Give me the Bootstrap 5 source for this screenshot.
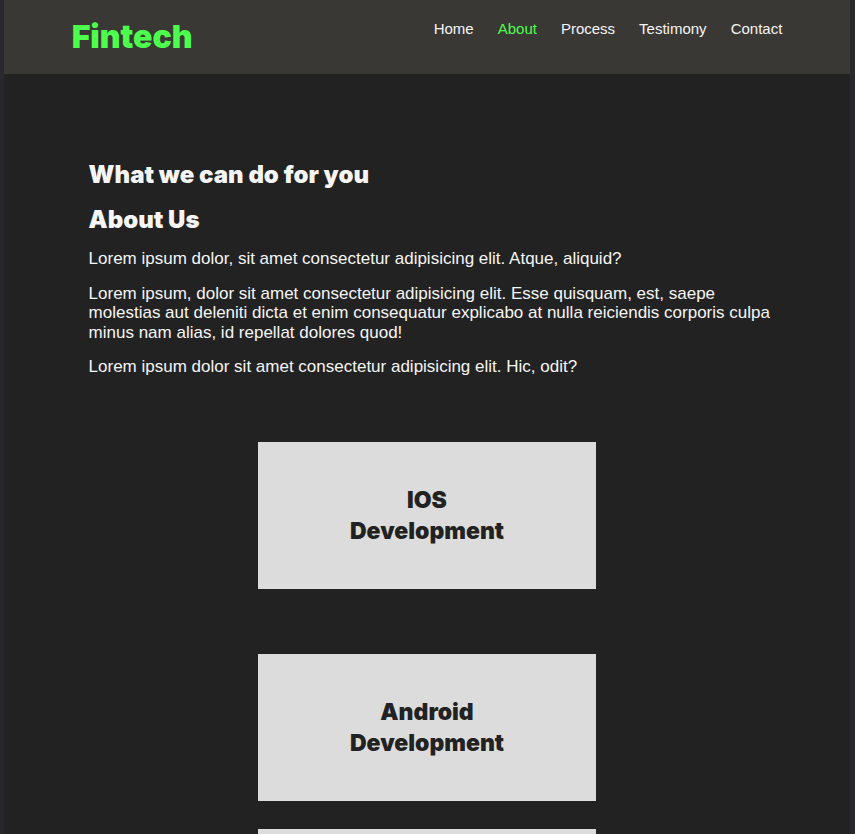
<!DOCTYPE html>
<html lang="en">
<head>
<meta charset="utf-8">
<meta name="viewport" content="width=device-width, initial-scale=1">
<title>Fintech</title>
<link href="https://cdn.jsdelivr.net/npm/bootstrap@5.3.0/dist/css/bootstrap.min.css" rel="stylesheet">
<style>
body { background: #29282d; color: #f5f5f5; font-family: "Liberation Sans", Arial, sans-serif; font-size: 17px; line-height: 1.15; }
.page-shell { margin: 0 5px 0 4px; background: #222; }
.site-header { background: #3a3835; padding: 15px 8% 16px; }
.brand-name { color: #4dff4d; font: 900 32px/43px Inter, "Arial Black", sans-serif; }
.site-header .nav { gap: 24px; padding-top: 4px; }
.site-header .nav-link { color: #f5f5f5; font-size: 15px; line-height: 20px; padding: 0; }
.site-header .nav-link.active { color: #4dff4d; }
.intro { padding: 85px 8% 0 10%; }
.display-title { font: 900 24px/32px Inter, "Arial Black", sans-serif; margin-bottom: 13px; }
.intro p { margin-bottom: 15px; }
.services { padding: 50px 0 0; }
.service-box { width: 40%; min-height: 147px; background: #dcdcdc; color: #222; padding: 43px 80px 42px; text-align: center; margin: 0 auto 65px; }
.service-box + .service-box { margin-bottom: 28px; }
.service-box h3 { font: 900 23px/31px Inter, "Arial Black", sans-serif; margin: 0; }
</style>
<script src="https://cdn.jsdelivr.net/npm/bootstrap@5.3.0/dist/js/bootstrap.bundle.min.js"></script>
</head>
<body class="overflow-x-hidden">
<div class="page-shell min-vh-100">
  <header class="site-header d-flex justify-content-between align-items-start">
    <a class="brand-name text-decoration-none" href="#home">Fintech</a>
    <nav class="nav" aria-label="Main">
      <a class="nav-link" href="#home">Home</a>
      <a class="nav-link active" aria-current="page" href="#about">About</a>
      <a class="nav-link" href="#process">Process</a>
      <a class="nav-link" href="#testimony">Testimony</a>
      <a class="nav-link" href="#contact">Contact</a>
    </nav>
  </header>
  <main id="about">
    <section class="intro">
      <h1 class="display-title">What we can do for you</h1>
      <h2 class="display-title">About Us</h2>
      <p>Lorem ipsum dolor, sit amet consectetur adipisicing elit. Atque, aliquid?</p>
      <p>Lorem ipsum, dolor sit amet consectetur adipisicing elit. Esse quisquam, est, saepe molestias aut deleniti dicta et enim consequatur explicabo at nulla reiciendis corporis culpa minus nam alias, id repellat dolores quod!</p>
      <p>Lorem ipsum dolor sit amet consectetur adipisicing elit. Hic, odit?</p>
    </section>
    <section class="services">
      <article class="service-box"><h3>IOS Development</h3></article>
      <article class="service-box"><h3>Android Development</h3></article>
      <article class="service-box"></article>
    </section>
  </main>
</div>
</body>
</html>
